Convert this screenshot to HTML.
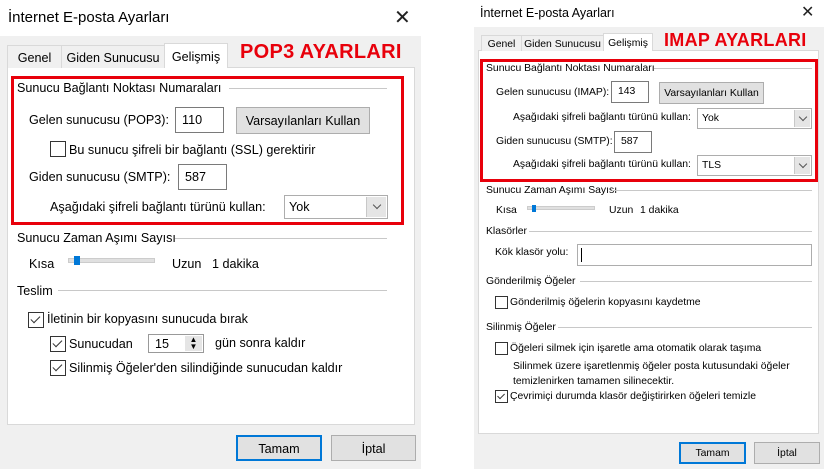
<!DOCTYPE html>
<html><head><meta charset="utf-8"><style>
*{margin:0;padding:0;box-sizing:border-box}
body{width:824px;height:469px;background:#fff;position:relative;overflow:hidden;font-family:"Liberation Sans","DejaVu Sans",sans-serif;color:#000}
div,span{position:absolute}
.L{font-size:12.6px;line-height:16px;white-space:nowrap}
.R{font-size:10.4px;line-height:13px;white-space:nowrap}
.ln{height:1px;background:#c8c8c8}
.inp{background:#fff;border:1px solid #7a7a7a}
.btn{background:#e1e1e1;border:1px solid #adadad;text-align:center}
.cb{background:#fff;border:1px solid #333}
.red{border:3px solid #e8000b}
.ck::after{content:"";position:absolute;left:30%;top:8%;width:30%;height:55%;border-right:1.5px solid #333;border-bottom:1.5px solid #333;transform:rotate(45deg)}
.tab{background:#f0f0f0;border:1px solid #d9d9d9;border-bottom:none;text-align:center}
.sel{background:#fff;border:1px solid #d9d9d9;border-bottom:none;text-align:center}
.arr{border-left:1px solid #c8c8c8;background:#e5e5e5}
.arr::after{content:"";position:absolute;left:35%;top:25%;width:5px;height:5px;border-right:1px solid #555;border-bottom:1px solid #555;transform:rotate(45deg)}
</style></head><body>

<!-- LEFT DIALOG -->
<div style="left:0;top:36px;width:421px;height:433px;background:#f0f0f0"></div>
<div class="L" style="left:8px;top:9px;font-size:15px;line-height:18px">İnternet E-posta Ayarları</div>
<div style="left:394px;top:8px;font-size:20px;line-height:20px;color:#222">✕</div>
<div style="left:7px;top:67px;width:408px;height:358px;background:#fff;border:1px solid #d9d9d9"></div>
<div class="tab L" style="left:7px;top:45px;width:55px;height:23px;padding-top:4px">Genel</div>
<div class="tab L" style="left:61px;top:45px;width:104px;height:23px;padding-top:4px">Giden Sunucusu</div>
<div class="sel L" style="left:164px;top:43px;width:64px;height:25px;padding-top:5px">Gelişmiş</div>
<div style="left:240px;top:41px;font-size:20px;font-weight:bold;color:#e8000b;line-height:22px;letter-spacing:0.3px">POP3 AYARLARI</div>
<div class="red" style="left:11px;top:76px;width:393px;height:149px"></div>
<div class="L" style="left:17px;top:80px">Sunucu Bağlantı Noktası Numaraları</div>
<div class="ln" style="left:229px;top:88px;width:158px"></div>
<div class="L" style="left:29px;top:112px">Gelen sunucusu (POP3):</div>
<div class="inp L" style="left:175px;top:107px;width:49px;height:26px;padding:4px 6px">110</div>
<div class="btn L" style="left:236px;top:107px;width:134px;height:27px;padding-top:5px">Varsayılanları Kullan</div>
<div class="cb" style="left:50px;top:141px;width:16px;height:16px"></div>
<div class="L" style="left:69px;top:142px">Bu sunucu şifreli bir bağlantı (SSL) gerektirir</div>
<div class="L" style="left:29px;top:169px">Giden sunucusu (SMTP):</div>
<div class="inp L" style="left:178px;top:164px;width:49px;height:26px;padding:4px 6px">587</div>
<div class="L" style="left:50px;top:199px">Aşağıdaki şifreli bağlantı türünü kullan:</div>
<div class="inp L" style="left:284px;top:195px;width:104px;height:24px;padding:3px 4px;border-color:#adadad">Yok<span class="arr" style="right:1px;top:1px;width:20px;height:20px"></span></div>
<div class="L" style="left:17px;top:230px">Sunucu Zaman Aşımı Sayısı</div>
<div class="ln" style="left:175px;top:238px;width:212px"></div>
<div class="L" style="left:29px;top:256px">Kısa</div>
<div style="left:68px;top:258px;width:87px;height:5px;background:#e0e0e0;border:1px solid #ccc"></div>
<div style="left:74px;top:256px;width:6px;height:9px;background:#0078d7"></div>
<div class="L" style="left:172px;top:256px">Uzun</div>
<div class="L" style="left:212px;top:256px">1 dakika</div>
<div class="L" style="left:17px;top:283px">Teslim</div>
<div class="ln" style="left:58px;top:290px;width:329px"></div>
<div class="cb ck" style="left:28px;top:312px;width:16px;height:16px"></div>
<div class="L" style="left:47px;top:311px">İletinin bir kopyasını sunucuda bırak</div>
<div class="cb ck" style="left:50px;top:336px;width:16px;height:16px"></div>
<div class="L" style="left:69px;top:336px">Sunucudan</div>
<div class="inp L" style="left:148px;top:334px;width:56px;height:19px;padding:1px 6px;border-color:#999">15<span style="right:1px;top:1px;width:17px;height:15px;background:#e5e5e5;font-size:8px;line-height:7px;text-align:center">▲<br>▼</span></div>
<div class="L" style="left:215px;top:335px">gün sonra kaldır</div>
<div class="cb ck" style="left:50px;top:360px;width:16px;height:16px"></div>
<div class="L" style="left:69px;top:360px">Silinmiş Öğeler'den silindiğinde sunucudan kaldır</div>
<div class="btn L" style="left:236px;top:435px;width:86px;height:26px;padding-top:4px;border:2px solid #0078d7">Tamam</div>
<div class="btn L" style="left:331px;top:435px;width:85px;height:26px;padding-top:5px">İptal</div>

<!-- RIGHT DIALOG -->
<div style="left:474px;top:27px;width:350px;height:442px;background:#f0f0f0"></div>
<div class="R" style="left:480px;top:6px;font-size:12.5px;line-height:15px">İnternet E-posta Ayarları</div>
<div style="left:801px;top:5px;font-size:16px;line-height:16px;color:#222">✕</div>
<div style="left:478px;top:50px;width:341px;height:384px;background:#fff;border:1px solid #d9d9d9"></div>
<div class="tab R" style="left:481px;top:35px;width:41px;height:16px;padding-top:2px">Genel</div>
<div class="tab R" style="left:521px;top:35px;width:83px;height:16px;padding-top:2px">Giden Sunucusu</div>
<div class="sel R" style="left:603px;top:33px;width:50px;height:18px;padding-top:3px">Gelişmiş</div>
<div style="left:664px;top:30px;font-size:18px;font-weight:bold;color:#e8000b;line-height:20px;letter-spacing:0.3px">IMAP AYARLARI</div>
<div class="red" style="left:480px;top:59px;width:338px;height:123px"></div>
<div class="R" style="left:486px;top:62px">Sunucu Bağlantı Noktası Numaraları</div>
<div class="ln" style="left:654px;top:68px;width:158px"></div>
<div class="R" style="left:496px;top:86px">Gelen sunucusu (IMAP):</div>
<div class="inp R" style="left:611px;top:81px;width:38px;height:22px;padding:3px 6px">143</div>
<div class="btn R" style="left:659px;top:82px;width:105px;height:22px;padding-top:4px">Varsayılanları Kullan</div>
<div class="R" style="left:513px;top:111px">Aşağıdaki şifreli bağlantı türünü kullan:</div>
<div class="inp R" style="left:697px;top:108px;width:115px;height:21px;padding:3px 4px;border-color:#adadad">Yok<span class="arr" style="right:1px;top:1px;width:16px;height:17px"></span></div>
<div class="R" style="left:496px;top:135px">Giden sunucusu (SMTP):</div>
<div class="inp R" style="left:614px;top:131px;width:38px;height:22px;padding:3px 6px">587</div>
<div class="R" style="left:513px;top:158px">Aşağıdaki şifreli bağlantı türünü kullan:</div>
<div class="inp R" style="left:697px;top:155px;width:115px;height:21px;padding:3px 4px;border-color:#adadad">TLS<span class="arr" style="right:1px;top:1px;width:16px;height:17px"></span></div>
<div class="R" style="left:486px;top:184px">Sunucu Zaman Aşımı Sayısı</div>
<div class="ln" style="left:612px;top:190px;width:200px"></div>
<div class="R" style="left:496px;top:204px">Kısa</div>
<div style="left:527px;top:206px;width:68px;height:4px;background:#e0e0e0;border:1px solid #ccc"></div>
<div style="left:532px;top:205px;width:4px;height:7px;background:#0078d7"></div>
<div class="R" style="left:609px;top:204px">Uzun</div>
<div class="R" style="left:640px;top:204px">1 dakika</div>
<div class="R" style="left:486px;top:225px">Klasörler</div>
<div class="ln" style="left:529px;top:231px;width:283px"></div>
<div class="R" style="left:495px;top:246px">Kök klasör yolu:</div>
<div class="inp" style="left:577px;top:244px;width:235px;height:22px;border-color:#adadad"><span style="left:3px;top:3px;width:1px;height:14px;background:#000"></span></div>
<div class="R" style="left:486px;top:275px">Gönderilmiş Öğeler</div>
<div class="ln" style="left:580px;top:281px;width:232px"></div>
<div class="cb" style="left:495px;top:296px;width:13px;height:13px"></div>
<div class="R" style="left:510px;top:296px">Gönderilmiş öğelerin kopyasını kaydetme</div>
<div class="R" style="left:486px;top:321px">Silinmiş Öğeler</div>
<div class="ln" style="left:558px;top:327px;width:254px"></div>
<div class="cb" style="left:495px;top:342px;width:13px;height:13px"></div>
<div class="R" style="left:510px;top:342px">Öğeleri silmek için işaretle ama otomatik olarak taşıma</div>
<div class="R" style="left:513px;top:360px">Silinmek üzere işaretlenmiş öğeler posta kutusundaki öğeler</div>
<div class="R" style="left:513px;top:375px">temizlenirken tamamen silinecektir.</div>
<div class="cb ck" style="left:495px;top:390px;width:13px;height:13px"></div>
<div class="R" style="left:510px;top:390px">Çevrimiçi durumda klasör değiştirirken öğeleri temizle</div>
<div class="btn R" style="left:679px;top:442px;width:67px;height:22px;padding-top:3px;border:2px solid #0078d7">Tamam</div>
<div class="btn R" style="left:754px;top:442px;width:66px;height:22px;padding-top:4px">İptal</div>
</body></html>
